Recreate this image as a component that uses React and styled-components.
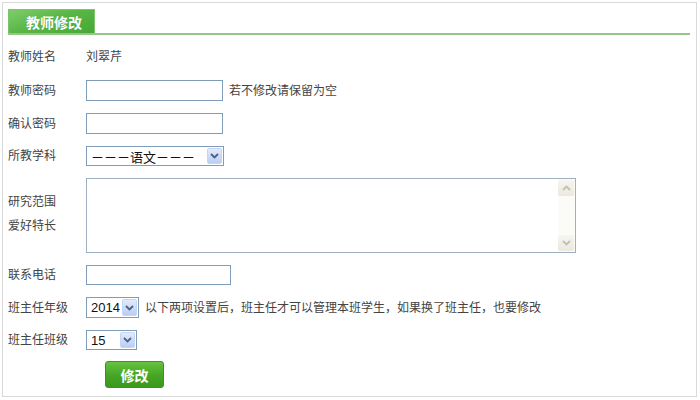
import React from "react";
import styled, { createGlobalStyle } from "styled-components";

const GlobalStyle = createGlobalStyle`
  html, body { margin: 0; padding: 0; background: #fff; }
  body {
    font-family: "Liberation Sans", "Noto Sans CJK SC", sans-serif;
    font-size: 12px;
    color: #444;
  }
`;

const Panel = styled.div`
  margin: 2px;
  width: 695px;
  height: 395px;
  box-sizing: border-box;
  border: 1px solid #d9d9d9;
  display: flex;
  flex-direction: column;
`;

const Header = styled.div`
  display: flex;
  margin: 6px 6px 0 5px;
  border-bottom: 2px solid #95c589;
`;

const Tab = styled.div`
  width: 87px;
  height: 24px;
  box-sizing: border-box;
  padding-left: 17px;
  display: flex;
  align-items: center;
  color: #fff;
  font-weight: bold;
  font-size: 14px;
  border: 1px solid #7cc36c;
  border-bottom: none;
  background: linear-gradient(160deg, #7fcd6c 0%, #5ab746 45%, #47a834 100%);
  text-shadow: 0 0 1px rgba(0, 0, 0, 0.15);
`;

const Form = styled.div`
  display: flex;
  flex-direction: column;
  gap: 12px;
  padding: 10px 0 0 5px;
`;

const Row = styled.div`
  display: flex;
  align-items: center;
  min-height: ${(p) => p.$h || 0}px;
`;

const Label = styled.div`
  width: 78px;
  flex: none;
  color: #444;
  line-height: ${(p) => p.$lh || 16}px;
`;

const LabelStack = styled.div`
  width: 78px;
  flex: none;
  display: flex;
  flex-direction: column;
  margin-top: -4px;
`;

const Value = styled.span`
  color: #444;
  line-height: 16px;
`;

const Input = styled.input`
  width: ${(p) => p.$w}px;
  height: ${(p) => p.$h}px;
  box-sizing: border-box;
  border: 1px solid #7f9db9;
  padding: 0 3px;
  margin: 0;
  font: 13px "Liberation Sans", "Noto Sans CJK SC", sans-serif;
  outline: none;
`;

const Hint = styled.span`
  margin-left: ${(p) => p.$ml || 6}px;
  color: #444;
  white-space: nowrap;
  line-height: 16px;
`;

const SelectBox = styled.div`
  width: ${(p) => p.$w}px;
  height: ${(p) => p.$h}px;
  box-sizing: border-box;
  border: 1px solid #7f9db9;
  display: flex;
  align-items: stretch;
  background: #fff;
  padding: 1px;
`;

const SelectText = styled.div`
  flex: 1;
  display: flex;
  align-items: center;
  padding-left: 3px;
  font: 13px "Liberation Sans", "Noto Sans CJK SC", sans-serif;
  color: #111;
  white-space: nowrap;
  overflow: hidden;
`;

const ArrowBtn = styled.div`
  width: 15px;
  flex: none;
  box-sizing: border-box;
  border: 1px solid #c6d5f5;
  border-radius: 2px;
  background: linear-gradient(#e3ebfc, #b9cdf4);
  display: flex;
  align-items: center;
  justify-content: center;
`;

const TextBox = styled.div`
  width: 490px;
  height: 75px;
  box-sizing: border-box;
  border: 1px solid #9fb0c4;
  display: flex;
`;

const TextArea = styled.textarea`
  flex: 1;
  border: none;
  resize: none;
  outline: none;
  margin: 0;
  padding: 2px;
  font: 12px "Liberation Sans", "Noto Sans CJK SC", sans-serif;
  overflow: hidden;
`;

const ScrollBar = styled.div`
  width: 16px;
  flex: none;
  background: #fbfbf7;
  display: flex;
  flex-direction: column;
  justify-content: space-between;
  padding: 1px 1px 1px 0;
`;

const ScrollBtn = styled.div`
  height: 16px;
  background: linear-gradient(#f6f5ef, #ebe9df);
  border-radius: 2px;
  display: flex;
  align-items: center;
  justify-content: center;
`;

const ButtonRow = styled.div`
  padding-left: 97px;
  margin-top: -1px;
`;

const SubmitButton = styled.button`
  width: 59px;
  height: 27px;
  box-sizing: border-box;
  border: 1px solid #3d9122;
  border-radius: 3px;
  background: linear-gradient(#66c23f, #46a526 55%, #3a981c);
  color: #fff;
  font: bold 14px "Liberation Sans", "Noto Sans CJK SC", sans-serif;
  padding: 0;
  cursor: pointer;
`;

const Chevron = ({ up, color = "#4d6185" }) => (
  <svg width="9" height="6" viewBox="0 0 9 6">
    <path
      d={up ? "M1 5 L4.5 1.5 L8 5" : "M1 1 L4.5 4.5 L8 1"}
      fill="none"
      stroke={color}
      strokeWidth="1.8"
    />
  </svg>
);

const FakeSelect = ({ w, h, value }) => (
  <SelectBox $w={w} $h={h}>
    <SelectText>{value}</SelectText>
    <ArrowBtn>
      <Chevron />
    </ArrowBtn>
  </SelectBox>
);

export default function App() {
  return (
    <>
      <GlobalStyle />
      <Panel>
        <Header>
          <Tab>教师修改</Tab>
        </Header>
        <Form>
          <Row $h={23}>
            <Label>教师姓名</Label>
            <Value>刘翠芹</Value>
          </Row>
          <Row>
            <Label>教师密码</Label>
            <Input type="password" $w={137} $h={21} />
            <Hint>若不修改请保留为空</Hint>
          </Row>
          <Row>
            <Label>确认密码</Label>
            <Input type="password" $w={137} $h={21} />
          </Row>
          <Row>
            <Label>所教学科</Label>
            <FakeSelect w={138} h={20} value="－－－语文－－－" />
          </Row>
          <Row>
            <LabelStack>
              <Label $lh={24}>研究范围</Label>
              <Label $lh={24}>爱好特长</Label>
            </LabelStack>
            <TextBox>
              <TextArea />
              <ScrollBar>
                <ScrollBtn>
                  <Chevron up color="#c2c0b3" />
                </ScrollBtn>
                <ScrollBtn>
                  <Chevron color="#c2c0b3" />
                </ScrollBtn>
              </ScrollBar>
            </TextBox>
          </Row>
          <Row>
            <Label>联系电话</Label>
            <Input type="text" $w={145} $h={20} />
          </Row>
          <Row>
            <Label>班主任年级</Label>
            <FakeSelect w={53} h={21} value="2014" />
            <Hint $ml={6}>
              以下两项设置后，班主任才可以管理本班学生，如果换了班主任，也要修改
            </Hint>
          </Row>
          <Row>
            <Label>班主任班级</Label>
            <FakeSelect w={51} h={20} value="15" />
          </Row>
          <ButtonRow>
            <SubmitButton>修改</SubmitButton>
          </ButtonRow>
        </Form>
      </Panel>
    </>
  );
}
